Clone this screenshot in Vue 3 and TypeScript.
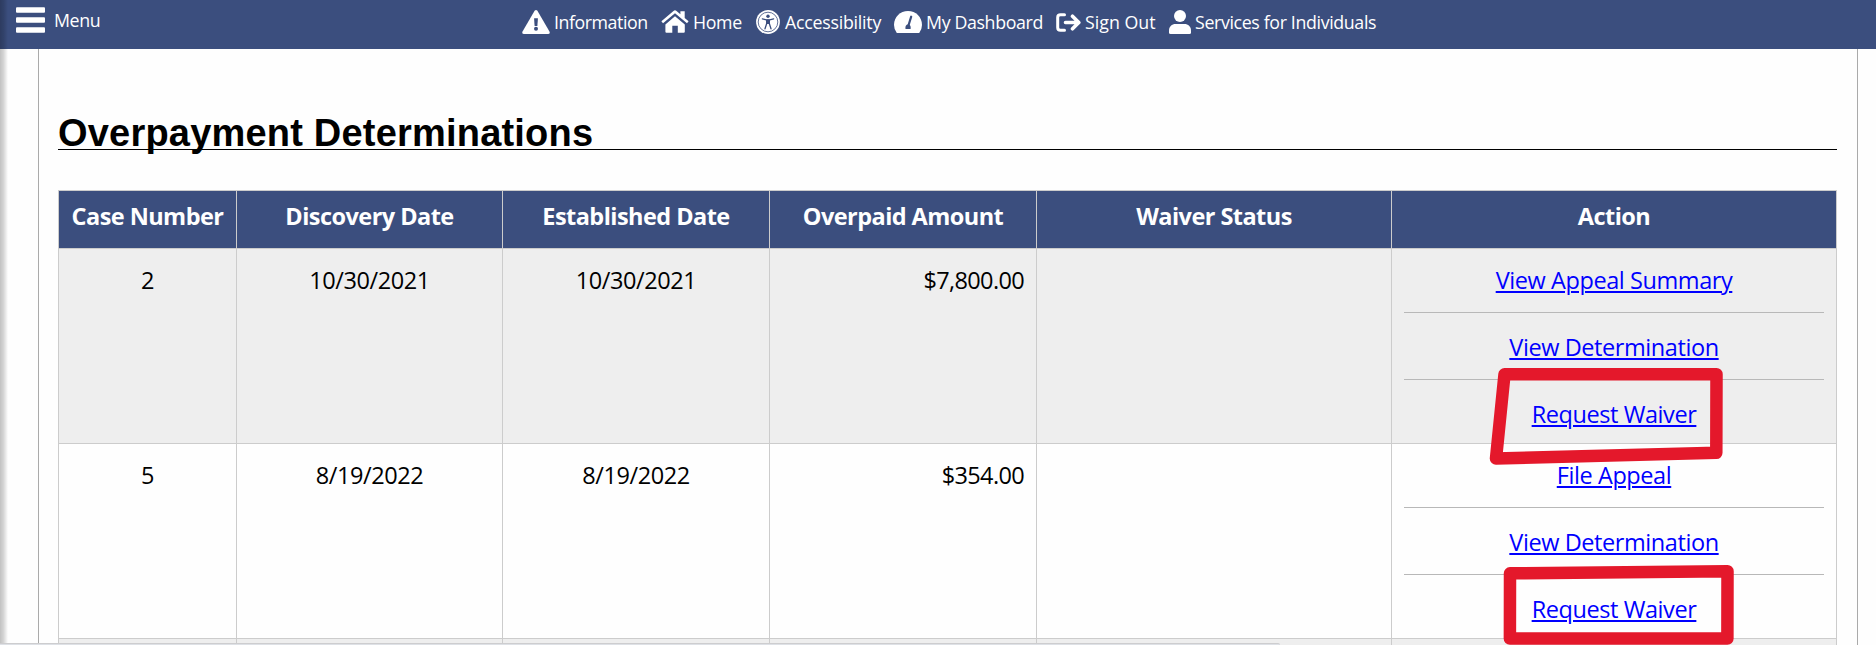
<script setup lang="ts">
interface NavItem {
  label: string
  icon: string
}

interface OverpaymentCase {
  number: string
  discovered: string
  established: string
  amount: string
  actions: string[]
}

const navItems: NavItem[] = [
  { label: 'Information', icon: 'warning' },
  { label: 'Home', icon: 'home' },
  { label: 'Accessibility', icon: 'access' },
  { label: 'My Dashboard', icon: 'gauge' },
  { label: 'Sign Out', icon: 'exit' },
  { label: 'Services for Individuals', icon: 'person' },
]

const headings: string[] = [
  'Case Number',
  'Discovery Date',
  'Established Date',
  'Overpaid Amount',
  'Waiver Status',
  'Action',
]

const cases: OverpaymentCase[] = [
  {
    number: '2',
    discovered: '10/30/2021',
    established: '10/30/2021',
    amount: '$7,800.00',
    actions: ['View Appeal Summary', 'View Determination', 'Request Waiver'],
  },
  {
    number: '5',
    discovered: '8/19/2022',
    established: '8/19/2022',
    amount: '$354.00',
    actions: ['File Appeal', 'View Determination', 'Request Waiver'],
  },
]
</script>

<template>
  <div class="page">
    <header class="topbar">
      <button class="menu" type="button">
        <svg class="bars" viewBox="0 0 29 26" aria-hidden="true">
          <rect x="0" y="0.3" width="29" height="5.4" rx="1" />
          <rect x="0" y="10.3" width="29" height="5.4" rx="1" />
          <rect x="0" y="20.3" width="29" height="5.4" rx="1" />
        </svg>
        <span class="menu-label">Menu</span>
      </button>
      <nav class="nav">
        <a v-for="item in navItems" :key="item.label" :class="['nav-item', item.icon]">
          <svg v-if="item.icon === 'warning'" class="icon" viewBox="0 0 28 24">
            <path fill="#fff" d="M12.6 .8Q14 -.8 15.4 .8L27.6 21.8Q28.2 24 26 24H2Q-.2 24 .4 21.8Z" />
            <path fill="#3b4e7e" d="M12.1 8.3h3.8l-.5 7.7h-2.8z" />
            <circle cx="14" cy="18.8" r="2" fill="#3b4e7e" />
          </svg>
          <svg v-else-if="item.icon === 'home'" class="icon" viewBox="0 0 28 23">
            <path fill="#fff" d="M14 6.3l9.8 8.3V21.700q0 1.100-1.100 1.100H16.800V15.700H11.300v7.100H5.500q-1.100 0-1.100-1.100V14.600z" />
            <path fill="#fff" d="M12.500 .9Q14 -.2 15.500 .9L19.400 4.200V1.200h4.300V7.900L27.600 11.300 26 13.200 14 3.300 2 13.200 .4 11.300z" />
          </svg>
          <svg v-else-if="item.icon === 'access'" class="icon" viewBox="0 0 24 24">
            <circle cx="12" cy="12" r="11.900" fill="#fff" />
            <circle cx="12" cy="12" r="9.800" fill="none" stroke="#3b4e7e" stroke-width=".8" />
            <circle cx="12" cy="6.200" r="1.700" fill="#3b4e7e" />
            <path fill="none" stroke="#3b4e7e" stroke-width="1.300" stroke-linecap="round" stroke-linejoin="round" d="M6.400 8.800L10.300 9.900H13.700L17.600 8.800M10.700 10V13.500L9 18.800M13.300 10V13.500L15 18.800" />
            <path fill="#3b4e7e" d="M10.300 9.500h3.400v4.600h-3.400z" />
          </svg>
          <svg v-else-if="item.icon === 'gauge'" class="icon" viewBox="0 0 28 22">
            <path fill="#fff" d="M2.800 22Q0 18.300 0 13.900C0 6.200 6.200 0 14 0s14 6.200 14 13.900Q28 18.300 25.200 22z" />
            <path fill="none" stroke="#3b4e7e" stroke-width="2.200" stroke-linecap="round" d="M17.200 5.700L14.600 14" />
            <path fill="#3b4e7e" d="M11.500 17.900q-.6-4 2.600-4.600 3.200.5 2.500 4.600z" />
          </svg>
          <svg v-else-if="item.icon === 'exit'" class="icon" viewBox="0 0 25 19">
            <path fill="none" stroke="#fff" stroke-width="3" stroke-linecap="round" d="M8.500 1.700H4.500Q1.700 1.700 1.700 4.500V14.500Q1.700 17.300 4.500 17.300H8.500" />
            <path fill="none" stroke="#fff" stroke-width="3.600" stroke-linecap="round" stroke-linejoin="round" d="M9.500 9.500H22M16.500 3.200L22.800 9.500 16.500 15.800" />
          </svg>
          <svg v-else class="icon" viewBox="0 0 22 24">
            <circle cx="11" cy="6" r="6" fill="#fff" />
            <path fill="#fff" d="M0 22.500V20.500C0 16.500 3 14 6.500 14H15.500C19 14 22 16.500 22 20.500V22.500Q22 24 20.500 24H1.500Q0 24 0 22.500z" />
          </svg>
          <span>{{ item.label }}</span>
        </a>
      </nav>
    </header>

    <main class="panel">
      <h1 class="title">Overpayment Determinations</h1>
      <table class="cases">
        <colgroup>
          <col class="c-number" />
          <col class="c-found" />
          <col class="c-date" />
          <col class="c-date" />
          <col class="c-status" />
          <col class="c-action" />
        </colgroup>
        <thead>
          <tr>
            <th v-for="heading in headings" :key="heading">{{ heading }}</th>
          </tr>
        </thead>
        <tbody>
          <tr v-for="row in cases" :key="row.number">
            <td>{{ row.number }}</td>
            <td>{{ row.discovered }}</td>
            <td>{{ row.established }}</td>
            <td class="amount">{{ row.amount }}</td>
            <td></td>
            <td>
              <div v-for="action in row.actions" :key="action" class="action">
                <a href="#">{{ action }}</a>
              </div>
            </td>
          </tr>
          <tr>
            <td v-for="heading in headings" :key="heading"></td>
          </tr>
        </tbody>
      </table>
    </main>

    <svg class="marks" viewBox="0 0 1876 645" aria-hidden="true">
      <path d="M1504.500 374.300L1716.500 374.200L1716.300 452.800L1496 458.500Z" />
      <path d="M1510 573.300L1727.500 571.200L1727.400 638.500H1509.900Z" />
    </svg>
    <div class="edge-shadow"></div>
    <div class="status-bubble"></div>
  </div>
</template>

<style>
html,
body {
  margin: 0;
  overflow: hidden;
  background: #fff;
}
</style>

<style scoped>
.page {
  position: relative;
  display: flex;
  flex-direction: column;
  width: 1876px;
  height: 645px;
  overflow: hidden;
  background: #fefefe;
  color: #000;
  font-family: "Open Sans", "Noto Sans", sans-serif;
}

.topbar {
  display: flex;
  flex: none;
  align-items: flex-start;
  height: 49px;
  background: #3b4e7e;
  color: #fff;
  font-size: 17.8px;
  line-height: 24px;
  letter-spacing: -0.36px;
}

.menu {
  display: flex;
  box-sizing: border-box;
  width: 522px;
  padding: 7px 0 0 16px;
  border: 0;
  background: none;
  color: inherit;
  font: inherit;
  letter-spacing: -0.4px;
}

.bars {
  width: 29px;
  height: 26px;
  margin-right: 9px;
  fill: #fff;
}

.menu-label {
  margin-top: 1px;
}

.nav {
  display: grid;
  grid-template-columns: 139px 95px 138px 162px 113px 220px;
  padding-top: 10px;
}

.nav-item {
  display: flex;
  white-space: nowrap;
}

.icon {
  flex: none;
  width: 28px;
  height: 24px;
  margin-right: 4px;
}

.warning {
  letter-spacing: -0.45px;
}

.home .icon {
  height: 23px;
}

.access .icon {
  width: 24px;
  margin-right: 5px;
}

.access {
  letter-spacing: -0.25px;
}

.gauge .icon {
  height: 22px;
  margin-top: 1px;
}

.exit .icon {
  width: 25px;
  height: 19px;
  margin-top: 3px;
}

.exit {
  letter-spacing: 0;
}

.person .icon {
  width: 22px;
}

.panel {
  flex: none;
  width: 1779px;
  height: 596px;
  margin-left: 38px;
  padding: 0 20px 0 19px;
  border: solid #aaa;
  border-width: 0 1px;
}

.title {
  height: 39px;
  margin: 0 0 40px;
  padding-top: 61px;
  border-bottom: 1px solid #000;
  font: bold 38px/46px "Liberation Sans", Arial, sans-serif;
  letter-spacing: 0.2px;
}

.cases {
  width: 1779px;
  table-layout: fixed;
  border-collapse: separate;
  border-spacing: 0;
  border: solid #ccc;
  border-width: 1px 0 0 1px;
  font-size: 23.5px;
  line-height: 32px;
}

.c-number {
  width: 178px;
}

.c-found {
  width: 266px;
}

.c-date {
  width: 267px;
}

.c-status {
  width: 355px;
}

.c-action {
  width: 445px;
}

th,
td {
  box-sizing: border-box;
  border: solid #ccc;
  border-width: 0 1px 1px 0;
  text-align: center;
  vertical-align: top;
  white-space: nowrap;
}

th {
  height: 58px;
  padding: 9px 0 0;
  background: #3b4e7e;
  color: #fff;
  font-weight: 700;
  letter-spacing: -0.55px;
}

td {
  height: 195px;
  padding: 15px 12px 13px;
  letter-spacing: -0.42px;
}

tbody tr:nth-child(odd) td {
  background: #eee;
}

.amount {
  text-align: right;
  letter-spacing: -0.65px;
}

.action + .action {
  margin-top: 16px;
  padding-top: 18px;
  border-top: 1px solid #b8b8b8;
}

.action a {
  color: #00f;
  text-decoration: underline;
  text-decoration-thickness: 2px;
  text-underline-offset: 2px;
}

.marks {
  position: absolute;
  inset: 0;
  width: 1876px;
  height: 645px;
  fill: none;
  stroke: #e4182b;
  stroke-width: 12.5;
  stroke-linejoin: round;
  pointer-events: none;
}

.edge-shadow {
  position: absolute;
  inset: 0 auto 0 0;
  width: 8px;
  background: linear-gradient(to right, rgba(0, 0, 0, 0.24), rgba(0, 0, 0, 0.16) 45%, transparent);
}

.status-bubble {
  position: absolute;
  bottom: 0;
  left: 0;
  box-sizing: border-box;
  width: 1280px;
  height: 2px;
  border-top: 1px solid #cdcdcf;
  border-top-right-radius: 3px;
  background: #dee1e6;
}
</style>
